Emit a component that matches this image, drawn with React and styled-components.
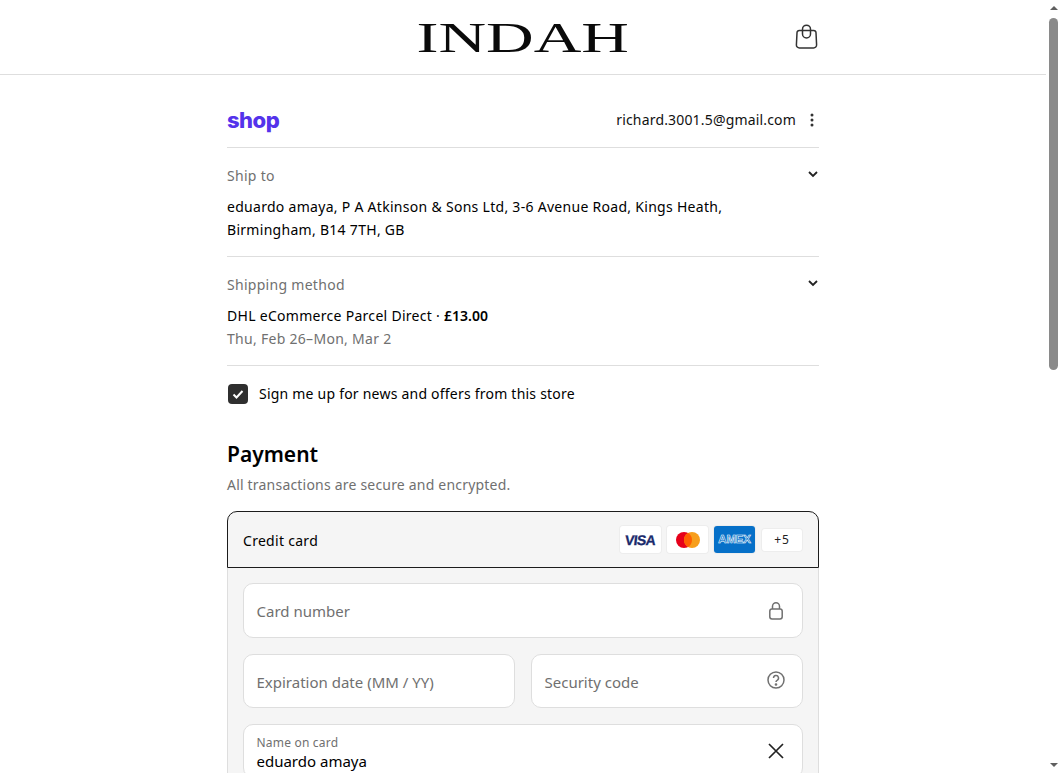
import React from "react";
import styled, { createGlobalStyle } from "styled-components";

const Global = createGlobalStyle`
  html, body { margin: 0; padding: 0; height: 100%; overflow: hidden; background: #fff; }
  body { font-family: "Noto Sans", "Open Sans", sans-serif; color: #000; }
  * { box-sizing: border-box; }
`;
const Viewport = styled.div`display: flex; width: 1061px; height: 773px; overflow: hidden;`;
const Page = styled.div`width: 1046px; height: 773px; overflow: hidden; flex: none;`;
const Scrollbar = styled.div`
  width: 15px; flex: none; display: flex; flex-direction: column; align-items: center;
  justify-content: space-between; padding: 6px 0 6px;
`;
const Arrow = styled.div`
  width: 0; height: 0; border-left: 4px solid transparent; border-right: 4px solid transparent;
  ${p => p.$down ? "border-top: 4px solid #5f5f5f;" : "border-bottom: 4px solid #5f5f5f;"}
`;
const Thumb = styled.div`
  width: 9px; height: 352px; background: #8a8a8a; border-radius: 4.5px; margin-top: 8px;
`;
const Track = styled.div`flex: 1; display: flex; flex-direction: column; align-items: center; width: 100%;`;
const Header = styled.header`
  height: 75px; border-bottom: 1px solid #dedede; display: flex; align-items: center; justify-content: center; position: relative;
`;
const Brand = styled.div`
  font-family: "Liberation Serif", serif; font-size: 42px; line-height: 42px; color: #0a0a0a;
  transform: scaleX(1.57); margin-top: 1px;
`;
const BagButton = styled.div`position: absolute; left: 795px; top: 24px; width: 25px; height: 26px;`;
const Main = styled.main`width: 592px; margin: 0 auto; font-size: 14px; line-height: 23px; letter-spacing: 0.29px;`;
const ShopRow = styled.div`
  height: 73px; display: flex; align-items: center; justify-content: space-between;
  border-bottom: 1px solid #dedede; padding-top: 17px;
`;
const ShopLogo = styled.div`
  font-family: "Inter", sans-serif; font-weight: 800; font-size: 22px; line-height: 28px; letter-spacing: -0.5px; color: #5433eb;
`;
const Account = styled.div`display: flex; align-items: center; gap: 8px; color: #111; letter-spacing: 0.17px; margin-right: -1px;`;
const Kebab = styled.svg`width: 16px; height: 16px; display: block;`;
const Section = styled.section`border-bottom: 1px solid #dedede; padding: 16px 0 15px;`;
const SectionHead = styled.div`
  display: flex; justify-content: space-between; align-items: center; color: #707070; height: 23px; margin-bottom: 8px;
`;
const Chevron = styled.svg`width: 12px; height: 12px; margin-top: -3px;`;
const Line = styled.div`color: ${p => p.$muted ? "#707070" : "#000"};`;
const Price = styled.b`font-weight: 600; letter-spacing: 0;`;
const CheckRow = styled.label`display: flex; align-items: center; gap: 11px; height: 55px; padding-left: 1px; letter-spacing: 0.22px;`;
const CheckBox = styled.span`
  width: 20px; height: 20px; border-radius: 4px; background: #2f2f2f; display: flex; align-items: center; justify-content: center;
`;
const Title = styled.h2`font-size: 21px; line-height: 28px; font-weight: 600; margin: 19px 0 0; letter-spacing: 0;`;
const Sub = styled.p`margin: 5px 0 0; color: #707070; line-height: 23px; letter-spacing: 0.2px;`;
const PayHead = styled.div`
  margin-top: 15px; height: 57px; border: 1px solid #1c1c1c; border-radius: 10px 10px 0 0; background: #f5f5f5;
  display: flex; align-items: center; justify-content: space-between; padding: 0 16px 0 15px;
`;
const PayLabel = styled.span`margin-top: 2px;`;
const Cards = styled.div`display: flex; gap: 6px; align-items: center;`;
const CardBadge = styled.div`
  width: 41px; height: 27px; border-radius: 3px; background: ${p => p.$bg || "#fff"}; display: flex; align-items: center; justify-content: center;
  box-shadow: 0 0 0 1px rgba(0,0,0,.03);
`;
const Visa = styled.span`
  font-family: "Liberation Sans", sans-serif; font-weight: 700; font-size: 14px; line-height: 1; color: #1a2a6c; letter-spacing: -0.6px;
  transform: skewX(-6deg); -webkit-text-stroke: 0.3px #1a2a6c;
`;
const Amex = styled.span`
  font-family: "Liberation Sans", sans-serif; font-weight: 700; font-size: 11.5px; line-height: 1; color: #0670c8; letter-spacing: -0.2px;
  -webkit-text-stroke: 0.55px #fff;
`;
const More = styled.div`
  width: 40px; height: 22px; margin-left: 1px; background: #fff; border-radius: 3px; font-size: 12px; line-height: 22px; text-align: center; color: #222;
  letter-spacing: 0.8px; box-shadow: 0 0 0 1px rgba(0,0,0,.03);
`;
const PayBody = styled.div`
  background: #f5f5f5; border-left: 1px solid #dedede; border-right: 1px solid #dedede; padding: 15px 15px 0;
  display: flex; flex-direction: column; gap: 16px; height: 300px;
`;
const FieldRow = styled.div`display: flex; gap: 16px; flex: none;`;
const Field = styled.div`
  flex: ${p => p.$stack ? "none" : "1"}; height: ${p => p.$h || 54}px; background: #fff; border: 1px solid #dedede; border-radius: 10px; padding: 0 12px;
  display: flex; align-items: center; justify-content: space-between; color: #707070; font-size: 15px; letter-spacing: 0;
`;
const FieldText = styled.span`margin-top: 2px; margin-left: 0.5px;`;
const Floating = styled.div`display: flex; flex-direction: column; padding-top: 3px; margin-left: 0.5px;`;
const FloatLabel = styled.span`font-size: 12px; line-height: 17px; color: #707070; letter-spacing: 0.2px;`;
const FloatValue = styled.span`font-size: 15px; line-height: 21px; color: #000;`;
const FieldIcon = styled.svg`width: 20px; height: 20px; flex: none; margin-right: 4px;`;

export default function App() {
  return (
    <Viewport>
      <Global />
      <Page>
        <Header>
          <Brand>INDAH</Brand>
          <BagButton>
            <svg width="25" height="26" viewBox="0 0 25 26" fill="none" stroke="#333" strokeWidth="1.5">
              <path d="M4.2 6.5h14.6a2.2 2.2 0 0 1 2.2 2.2l.6 12.2a3 3 0 0 1-3 3.1H4.4a3 3 0 0 1-3-3.1L2 8.7a2.2 2.2 0 0 1 2.2-2.2z" />
              <path d="M7.5 6V5.2a4 4 0 0 1 8 0V10a4 4 0 0 1-8 0z" />
            </svg>
          </BagButton>
        </Header>
        <Main>
          <ShopRow>
            <ShopLogo>shop</ShopLogo>
            <Account>
              richard.3001.5@gmail.com
              <Kebab viewBox="0 0 16 16" fill="#333"><circle cx="8" cy="3" r="1.5" /><circle cx="8" cy="8" r="1.5" /><circle cx="8" cy="13" r="1.5" /></Kebab>
            </Account>
          </ShopRow>
          <Section>
            <SectionHead>Ship to
              <Chevron viewBox="0 0 12 12" fill="none" stroke="#222" strokeWidth="1.8"><path d="M2 4l4 4 4-4" /></Chevron>
            </SectionHead>
            <Line>eduardo amaya, P A Atkinson &amp; Sons Ltd, 3-6 Avenue Road, Kings Heath,</Line>
            <Line>Birmingham, B14 7TH, GB</Line>
          </Section>
          <Section>
            <SectionHead>Shipping method
              <Chevron viewBox="0 0 12 12" fill="none" stroke="#222" strokeWidth="1.8"><path d="M2 4l4 4 4-4" /></Chevron>
            </SectionHead>
            <Line>DHL eCommerce Parcel Direct · <Price>£13.00</Price></Line>
            <Line $muted>Thu, Feb 26–Mon, Mar 2</Line>
          </Section>
          <CheckRow>
            <CheckBox>
              <svg width="14" height="14" viewBox="0 0 14 14" fill="none" stroke="#fff" strokeWidth="2"><path d="M2.5 7.5l3 3 6-6.5" /></svg>
            </CheckBox>
            Sign me up for news and offers from this store
          </CheckRow>
          <Title>Payment</Title>
          <Sub>All transactions are secure and encrypted.</Sub>
          <PayHead>
            <PayLabel>Credit card</PayLabel>
            <Cards>
              <CardBadge><Visa>VISA</Visa></CardBadge>
              <CardBadge>
                <svg width="24" height="16" viewBox="0 0 24 16"><circle cx="8" cy="8" r="8" fill="#e6001a" /><circle cx="16" cy="8" r="8" fill="#f79e1b" /><path d="M12 1.07a8 8 0 0 1 0 13.86 8 8 0 0 1 0-13.86z" fill="#ff5f00" /></svg>
              </CardBadge>
              <CardBadge $bg="#0670c8"><Amex>AMEX</Amex></CardBadge>
              <More>+5</More>
            </Cards>
          </PayHead>
          <PayBody>
            <Field $stack $h={55}><FieldText>Card number</FieldText>
              <FieldIcon viewBox="0 0 20 20" fill="none" stroke="#707070" strokeWidth="1.5">
                <rect x="3.8" y="8" width="12.4" height="10" rx="2.2" /><path d="M6.5 8V5.2a3.5 3.5 0 0 1 7 0V8" />
              </FieldIcon>
            </Field>
            <FieldRow>
              <Field><FieldText>Expiration date (MM / YY)</FieldText></Field>
              <Field><FieldText>Security code</FieldText>
                <FieldIcon viewBox="0 0 20 20" fill="none" stroke="#707070" strokeWidth="1.5">
                  <circle cx="10" cy="9" r="8" /><path d="M7.5 7a2.5 2.5 0 1 1 3.6 2.3c-.8.4-1.1.9-1.1 1.7" /><circle cx="10" cy="13.5" r=".6" fill="#707070" />
                </FieldIcon>
              </Field>
            </FieldRow>
            <Field $stack>
              <Floating><FloatLabel>Name on card</FloatLabel><FloatValue>eduardo amaya</FloatValue></Floating>
              <FieldIcon viewBox="0 0 20 20" fill="none" stroke="#222" strokeWidth="1.7"><path d="M3 3l14 14M17 3L3 17" /></FieldIcon>
            </Field>
          </PayBody>
        </Main>
      </Page>
      <Scrollbar>
        <Arrow />
        <Track><Thumb /></Track>
        <Arrow $down />
      </Scrollbar>
    </Viewport>
  );
}
